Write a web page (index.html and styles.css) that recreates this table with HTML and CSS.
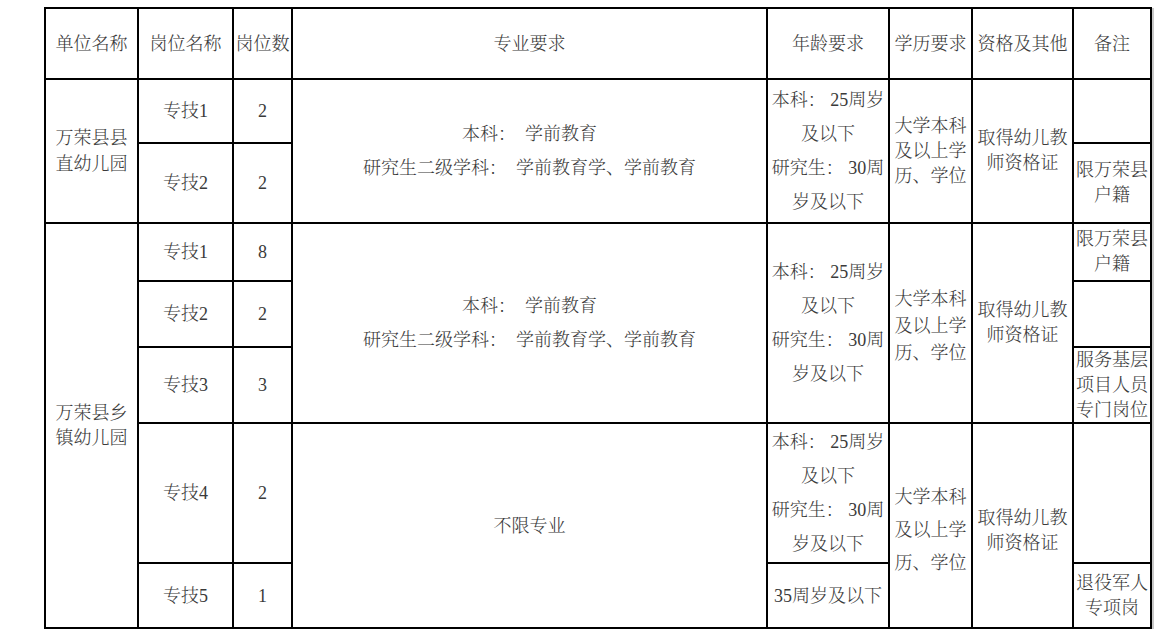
FILE: index.html
```html
<!DOCTYPE html>
<html lang="zh-CN">
<head>
<meta charset="utf-8">
<title>岗位表</title>
<link rel="stylesheet" href="styles.css">
</head>
<body>
<div class="sheet">
  <!-- header -->
  <div class="cell hd c1 r1">单位名称</div>
  <div class="cell hd c2 r1">岗位名称</div>
  <div class="cell hd c3 r1">岗位数</div>
  <div class="cell hd c4 r1">专业要求</div>
  <div class="cell hd c5 r1">年龄要求</div>
  <div class="cell hd c6 r1">学历要求</div>
  <div class="cell hd c7 r1">资格及其他</div>
  <div class="cell hd c8 r1">备注</div>

  <!-- group 1 -->
  <div class="cell c1 g1">万荣县县<br>直幼儿园</div>
  <div class="cell c2 r2">专技1</div>
  <div class="cell c3 r2">2</div>
  <div class="cell c2 r3">专技2</div>
  <div class="cell c3 r3">2</div>
  <div class="cell wide c4 g1">本科：&nbsp; 学前教育<br>研究生二级学科：&nbsp; 学前教育学、学前教育</div>
  <div class="cell wide c5 g1">本科：&nbsp;25周岁<br>及以下<br>研究生：&nbsp;30周<br>岁及以下</div>
  <div class="cell tight c6 g1 left">大学本科<br>及以上学<br>历、学位</div>
  <div class="cell tight c7 g1">取得幼儿教<br>师资格证</div>
  <div class="cell c8 r2"></div>
  <div class="cell tight c8 r3">限万荣县<br>户籍</div>

  <!-- group 2 -->
  <div class="cell tight c1 g2">万荣县乡<br>镇幼儿园</div>
  <div class="cell c2 r4">专技1</div>
  <div class="cell c3 r4">8</div>
  <div class="cell c2 r5">专技2</div>
  <div class="cell c3 r5">2</div>
  <div class="cell c2 r6">专技3</div>
  <div class="cell c3 r6">3</div>
  <div class="cell c2 r7">专技4</div>
  <div class="cell c3 r7">2</div>
  <div class="cell c2 r8">专技5</div>
  <div class="cell c3 r8">1</div>

  <div class="cell wide c4 g2a">本科：&nbsp; 学前教育<br>研究生二级学科：&nbsp; 学前教育学、学前教育</div>
  <div class="cell c4 g2b">不限专业</div>

  <div class="cell wide c5 g2a">本科：&nbsp;25周岁<br>及以下<br>研究生：&nbsp;30周<br>岁及以下</div>
  <div class="cell wide c5 r7">本科：&nbsp;25周岁<br>及以下<br>研究生：&nbsp;30周<br>岁及以下</div>
  <div class="cell c5 r8">35周岁及以下</div>

  <div class="cell mid c6 g2a left">大学本科<br>及以上学<br>历、学位</div>
  <div class="cell loose c6 g2b left">大学本科<br>及以上学<br>历、学位</div>

  <div class="cell tight c7 g2a">取得幼儿教<br>师资格证</div>
  <div class="cell tight c7 g2b low">取得幼儿教<br>师资格证</div>

  <div class="cell tight c8 r4">限万荣县<br>户籍</div>
  <div class="cell c8 r5"></div>
  <div class="cell tight c8 r6">服务基层<br>项目人员<br>专门岗位</div>
  <div class="cell c8 r7"></div>
  <div class="cell tight c8 r8">退役军人<br>专项岗</div>
</div>
</body>
</html>
```

FILE: styles.css
```css
html, body {
  margin: 0;
  padding: 0;
  background: #ffffff;
}

body {
  font-family: "Liberation Serif", "Noto Serif CJK SC", "Noto Sans CJK SC", serif;
  font-size: 18px;
  font-weight: 300;
  color: #3a3a3a;
}

.sheet {
  margin: 7px 0 0 44px;
  width: max-content;
  display: grid;
  grid-template-columns: 91px 93px 57px 473px 120px 81px 99px 76px;
  grid-template-rows: 69px 62px 78px 56px 64px 74px 138px 63px;
  gap: 2px;
  padding: 2px;
  background: #000000;
  box-shadow: 2px 1px 0 #c8c8c8;
}

.cell {
  background: #ffffff;
  display: flex;
  flex-direction: column;
  align-items: center;
  justify-content: center;
  text-align: center;
  white-space: nowrap;
  line-height: 26px;
  overflow: hidden;
}

.cell.wide { line-height: 34px; }
.cell.tight { line-height: 25px; }
.cell.mid { line-height: 27px; padding-top: 6px; }
.cell.loose { line-height: 33px; padding-top: 10px; }
.cell.low { padding-top: 10px; }
.cell.left { text-align: left; }

.c1 { grid-column: 1; }
.c2 { grid-column: 2; }
.c3 { grid-column: 3; }
.c4 { grid-column: 4; }
.c5 { grid-column: 5; }
.c6 { grid-column: 6; }
.c7 { grid-column: 7; }
.c8 { grid-column: 8; }

.r1 { grid-row: 1; }
.r2 { grid-row: 2; }
.r3 { grid-row: 3; }
.r4 { grid-row: 4; }
.r5 { grid-row: 5; }
.r6 { grid-row: 6; }
.r7 { grid-row: 7; }
.r8 { grid-row: 8; }

.g1 { grid-row: 2 / 4; }
.g2 { grid-row: 4 / 9; }
.g2a { grid-row: 4 / 7; }
.g2b { grid-row: 7 / 9; }
```
